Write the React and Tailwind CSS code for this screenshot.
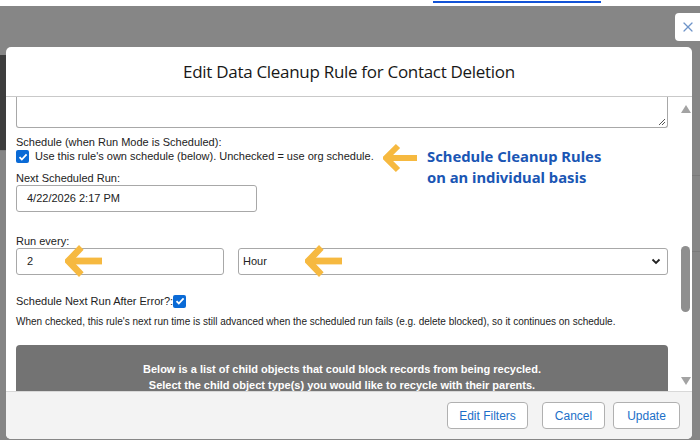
import { X } from 'lucide-react';

// Orange annotation arrow pointing left
function Arrow({ className = '', w = 34, h = 30 }) {
  return (
    <svg className={className} width={w} height={h} viewBox="0 0 34 30" fill="none" preserveAspectRatio="none">
      <path d="M34 15H5" stroke="#f6b940" strokeWidth="6" />
      <path d="M15 3L3 15l12 12" stroke="#f6b940" strokeWidth="6" strokeLinejoin="miter" />
    </svg>
  );
}

function Check() {
  return (
    <span className="inline-flex items-center justify-center w-[13px] h-[13px] rounded-[2px] bg-[#0a6ad6] shrink-0">
      <svg width="10" height="10" viewBox="0 0 10 10" fill="none">
        <path d="M1.5 5.2l2.3 2.3L8.6 2.3" stroke="white" strokeWidth="1.8" />
      </svg>
    </span>
  );
}

function Btn({ w, children }) {
  return (
    <button className={`${w} h-[27px] rounded-[4px] border border-[#b0b0b0] bg-white text-[#1b6fc8] text-[12px]`}>
      {children}
    </button>
  );
}

export default function App() {
  return (
    <div className="w-[700px] h-[440px] overflow-hidden bg-[#868686] font-['Liberation_Sans',Arial,sans-serif] text-[#222] relative">
      {/* page tab strip behind the overlay */}
      <div className="h-[6px] bg-white pl-[433px] pt-px">
        <div className="w-[168px] h-[2px] bg-[#1353d6]" />
      </div>

      <div className="flex h-[434px]">
        {/* background page peeking out on the left */}
        <div className="w-[6px] flex flex-col">
          <div className="h-[49px]" />
          <div className="h-[95px] bg-[#3d3d3d]" />
          <div className="flex-1 bg-[#858585] border-t border-[#7a7a7a]" />
        </div>

        {/* modal */}
        <div className="mt-[41px] w-[686px] h-[392px] bg-white rounded-[5px] flex flex-col overflow-hidden">
          <div className="h-[50px] shrink-0 border-b border-[#c9c9c9] flex items-center justify-center">
            <h1 className="text-[17px] text-[#181818] font-['Open_Sans',sans-serif] tracking-[-0.3px]">
              Edit Data Cleanup Rule for Contact Deletion
            </h1>
          </div>

          <div className="flex flex-1 min-h-0">
            <div className="flex-1 pl-[10px] pr-[11px] overflow-hidden text-[11px]">
              <div className="h-[31px] border-x border-b border-[#a8a8a8] rounded-b-[3px] flex items-end justify-end p-[2px]">
                <svg width="7" height="7" viewBox="0 0 7 7">
                  <path d="M1 7L7 1M4 7L7 4" stroke="#555" strokeWidth="1" />
                </svg>
              </div>

              <div className="mt-[7px] leading-[14px]">Schedule (when Run Mode is Scheduled):</div>
              <div className="flex items-center h-[15px] relative">
                <Check />
                <span className="ml-[6px]">Use this rule's own schedule (below). Unchecked = use org schedule.</span>
                <Arrow className="ml-[9px] mt-[2px]" />
                <div className="absolute left-[411px] top-[-3px] font-['Noto_Sans',sans-serif] font-bold text-[14.8px] leading-[21px] text-[#1a56b4]">
                  Schedule Cleanup Rules<br />on an individual basis
                </div>
              </div>

              <div className="mt-[7px] leading-[14px]">Next Scheduled Run:</div>
              <div className="w-[241px] h-[27px] border border-[#a8a8a8] rounded-[3px] flex items-center pl-[10px]">
                4/22/2026 2:17 PM
              </div>

              <div className="mt-[22px] leading-[14px]">Run every:</div>
              <div className="flex gap-[14px]">
                <div className="relative w-[208px] h-[27px] border border-[#a8a8a8] rounded-[3px] flex items-center pl-[10px]">
                  2
                  <Arrow w={37} h={34} className="absolute left-[48px] top-[-5px]" />
                </div>
                <div className="relative flex-1 h-[27px] border border-[#a8a8a8] rounded-[3px] flex items-center pl-[4px] pr-[6px]">
                  <span className="flex-1">Hour</span>
                  <svg width="10" height="7" viewBox="0 0 10 7" fill="none">
                    <path d="M1.5 1.5L5 5l3.5-3.5" stroke="#222" strokeWidth="1.8" />
                  </svg>
                  <Arrow w={37} h={34} className="absolute left-[66px] top-[-5px]" />
                </div>
              </div>

              <div className="mt-[19px] flex items-center h-[14px]">
                <span>Schedule Next Run After Error?:</span>
                <Check />
              </div>
              <div className="mt-[7px] text-[10px] leading-[13px]">
                When checked, this rule's next run time is still advanced when the scheduled run fails (e.g. delete blocked), so it continues on schedule.
              </div>

              <div className="mt-[17px] h-[60px] bg-[#737373] rounded-t-[4px] text-white font-bold text-center leading-[16px] pt-[16px] text-[11px]">
                <div>Below is a list of child objects that could block records from being recycled.</div>
                <div>Select the child object type(s) you would like to recycle with their parents.</div>
              </div>
            </div>

            {/* fake scrollbar */}
            <div className="w-[13px] shrink-0 flex flex-col items-center">
              <svg className="mt-[8px]" width="10" height="8" viewBox="0 0 10 8">
                <path d="M5 0L10 8H0z" fill="#a3a3a3" />
              </svg>
              <div className="mt-[133px] w-[9px] h-[66px] rounded-full bg-[#8f8f8f]" />
              <div className="flex-1" />
              <svg className="mb-[6px]" width="10" height="8" viewBox="0 0 10 8">
                <path d="M0 0H10L5 8z" fill="#a3a3a3" />
              </svg>
            </div>
          </div>

          <div className="h-[48px] shrink-0 bg-[#f3f3f3] border-t border-[#d8d8d8] flex items-center justify-end pr-[12px]">
            <Btn w="w-[81px]">Edit Filters</Btn>
            <div className="w-[14px]" />
            <Btn w="w-[63px]">Cancel</Btn>
            <div className="w-[8px]" />
            <Btn w="w-[67px]">Update</Btn>
          </div>
        </div>

        <div className="flex-1 flex flex-col">
          <div className="h-[169px]" />
          <div className="h-px bg-[#7a7a7a]" />
          <div className="h-[75px]" />
          <div className="h-px bg-[#7a7a7a]" />
        </div>
      </div>

      {/* close button over the overlay */}
      <button className="absolute right-0 top-[13px] w-[25px] h-[28px] bg-white rounded-l-[4px] flex items-center justify-center">
        <X size={16} strokeWidth={1.8} className="text-[#6f94c9]" />
      </button>
    </div>
  );
}
